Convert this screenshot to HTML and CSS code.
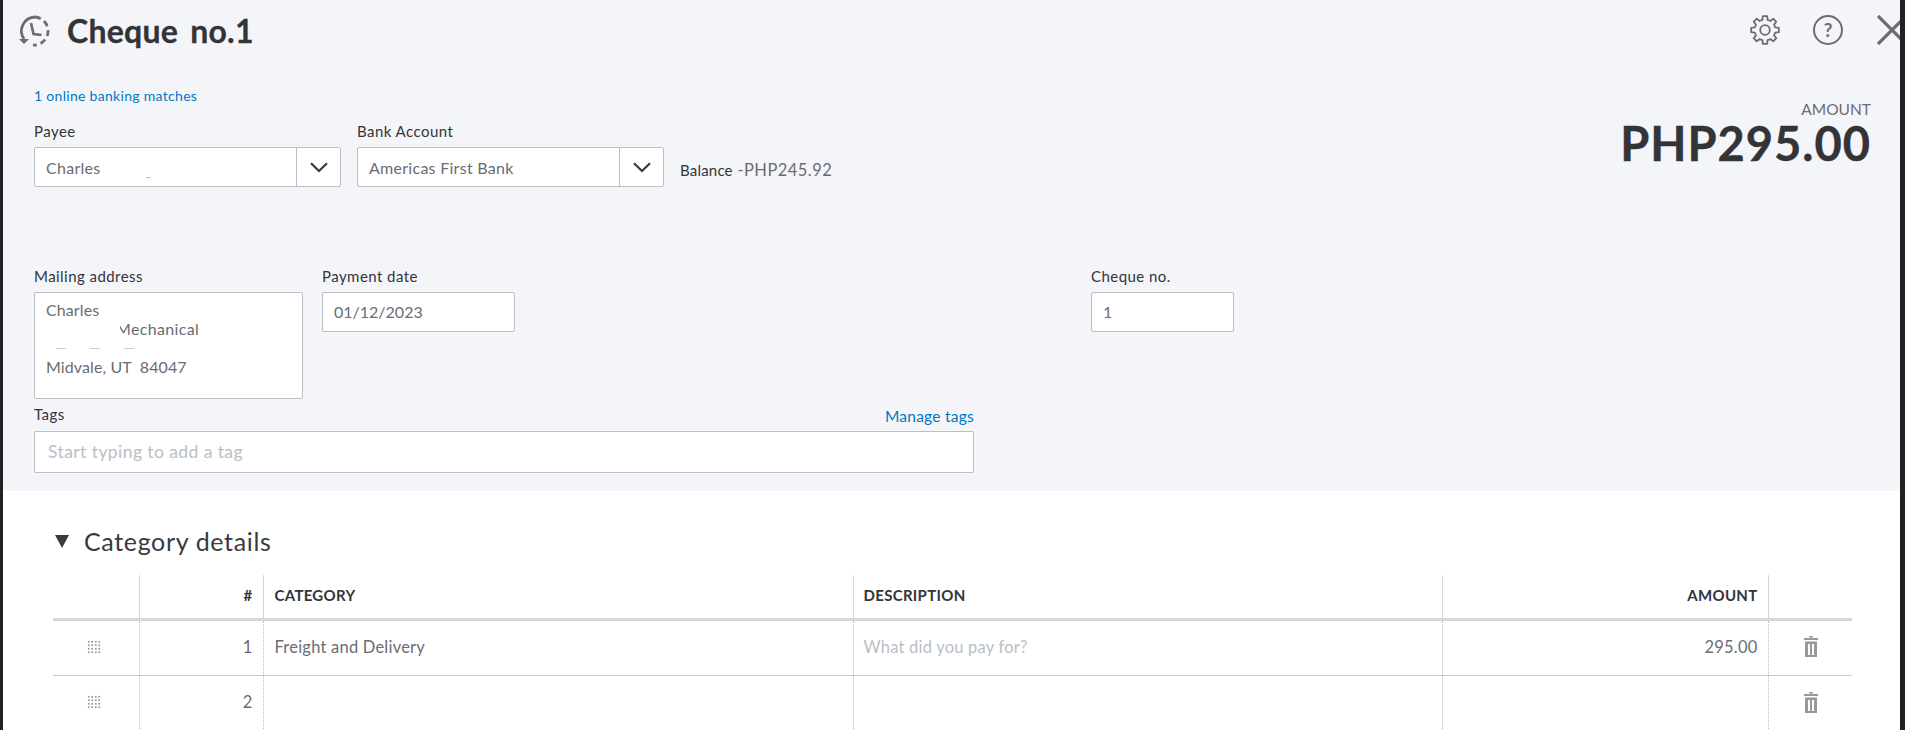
FILE: index.html
```html
<!DOCTYPE html>
<html lang="en">
<head>
<meta charset="utf-8">
<title>Cheque no.1</title>
<link rel="stylesheet" href="styles.css">
</head>
<body>
<div class="page">
  <section class="panel">
    <header class="head">
      <svg class="history" width="36" height="34" viewBox="0 0 36 34" fill="none">
        <path d="M18 3 A14 14 0 0 0 7 25" stroke="#6b6c72" stroke-width="2.8"/>
        <path d="M2 25 H12 L7 30 Z" fill="#6b6c72"/>
        <path d="M18 3 A14 14 0 0 1 16 31" stroke="#6b6c72" stroke-width="2.8" stroke-dasharray="6 4"/>
        <path d="M14 9 L16.5 20 L24.5 21" stroke="#6b6c72" stroke-width="2.6"/>
      </svg>
      <h1 class="title">Cheque no.1</h1>
      <div class="head-icons">
        <svg class="gear" width="30" height="30" viewBox="0 0 30 30" fill="none" stroke="#6b6c72" stroke-width="1.8" stroke-linejoin="round">
          <defs><path id="tooth" d="M10.98 5.3 L12.46 4.81 L12.81 1.17 H17.19 L17.54 4.81 L19.02 5.3"/></defs>
          <use href="#tooth"/>
          <use href="#tooth" transform="rotate(45 15 15)"/>
          <use href="#tooth" transform="rotate(90 15 15)"/>
          <use href="#tooth" transform="rotate(135 15 15)"/>
          <use href="#tooth" transform="rotate(180 15 15)"/>
          <use href="#tooth" transform="rotate(225 15 15)"/>
          <use href="#tooth" transform="rotate(270 15 15)"/>
          <use href="#tooth" transform="rotate(315 15 15)"/>
          <circle cx="15" cy="15" r="4.8"/>
        </svg>
        <span class="help">?</span>
        <div class="close-wrap">
          <svg class="close" width="30" height="30" viewBox="0 0 30 30" fill="none" stroke="#6b6c72" stroke-width="3.2">
            <path d="M1 1 L29 29 M29 1 L1 29"/>
          </svg>
        </div>
      </div>
    </header>

    <div class="top">
      <div>
        <a class="match-link">1 online banking matches</a>
        <div class="row-one">
          <div class="field">
            <label class="label">Payee</label>
            <div class="combo"><span class="combo-value">Charles<i class="speck"></i></span><span class="combo-btn"><svg width="18" height="11" viewBox="0 0 18 11" fill="none" stroke="#393a3d" stroke-width="2.2"><path d="M1 1.2 L9 9 L17 1.2"/></svg></span></div>
          </div>
          <div class="field">
            <label class="label">Bank Account</label>
            <div class="combo"><span class="combo-value">Americas First Bank</span><span class="combo-btn"><svg width="18" height="11" viewBox="0 0 18 11" fill="none" stroke="#393a3d" stroke-width="2.2"><path d="M1 1.2 L9 9 L17 1.2"/></svg></span></div>
          </div>
          <div class="balance"><span class="balance-key">Balance</span> -PHP245.92</div>
        </div>
      </div>
      <div class="amount">
        <div class="amount-label">AMOUNT</div>
        <div class="amount-value">PHP295.00</div>
      </div>
    </div>

    <div class="row-two">
      <div class="field mailing">
        <label class="label">Mailing address</label>
        <div class="address">
          <div>Charles</div>
          <div class="addr-mech">Mechanical<span class="addr-mask"></span></div>
          <div class="addr-blank"><i></i><i></i><i></i></div>
          <div class="addr-city">Midvale, UT&nbsp; 84047</div>
        </div>
      </div>
      <div class="field date">
        <label class="label">Payment date</label>
        <div class="input">01/12/2023</div>
      </div>
      <div class="field cheque">
        <label class="label">Cheque no.</label>
        <div class="input">1</div>
      </div>
    </div>

    <div class="tags">
      <div class="tags-head">
        <label class="label">Tags</label>
        <a class="manage">Manage tags</a>
      </div>
      <div class="tag-input">Start typing to add a tag</div>
    </div>
  </section>

  <section class="details">
    <h2 class="details-title"><span class="tri"></span>Category details</h2>
    <table class="grid">
      <colgroup>
        <col class="c-drag"><col class="c-num"><col class="c-cat"><col class="c-desc"><col class="c-amt"><col class="c-del">
      </colgroup>
      <thead>
        <tr><th></th><th class="right">#</th><th class="cat">CATEGORY</th><th>DESCRIPTION</th><th class="right">AMOUNT</th><th></th></tr>
      </thead>
      <tbody>
        <tr>
          <td><span class="dots"></span></td>
          <td class="right">1</td>
          <td class="cat">Freight and Delivery</td>
          <td class="placeholder">What did you pay for?</td>
          <td class="right">295.00</td>
          <td><svg class="trash" width="14" height="21" viewBox="0 0 14 21" fill="#97989c"><path d="M5 0 H9 V1.5 H5 Z M0 2 H14 V4 H0 Z M1 5.5 H13 V21 H1 Z"/><path d="M4 8 H6 V19 H4 Z M8 8 H10 V19 H8 Z" fill="#fff"/></svg></td>
        </tr>
        <tr>
          <td><span class="dots"></span></td>
          <td class="right">2</td>
          <td></td>
          <td></td>
          <td></td>
          <td><svg class="trash" width="14" height="21" viewBox="0 0 14 21" fill="#97989c"><path d="M5 0 H9 V1.5 H5 Z M0 2 H14 V4 H0 Z M1 5.5 H13 V21 H1 Z"/><path d="M4 8 H6 V19 H4 Z M8 8 H10 V19 H8 Z" fill="#fff"/></svg></td>
        </tr>
      </tbody>
    </table>
  </section>
</div>
</body>
</html>
```
FILE: styles.css
```css
* { box-sizing: border-box; }
html, body { margin: 0; height: 730px; overflow: hidden; background: #222; }
body { font-family: Lato, "Noto Sans", sans-serif; color: #393a3d; }
.page { margin: 0 5px 0 3px; height: 730px; overflow: hidden; background: #fff; }

.panel { background: #f4f5f8; height: 491px; padding: 0 0 0 31px; }

.head { display: flex; align-items: center; height: 60px; margin-left: -17px; }
.history { flex: none; margin-top: 2px; }
.title { margin: 0 0 0 14px; font-size: 32px; font-weight: 700; word-spacing: 4px; letter-spacing: .25px; color: #333437; -webkit-text-stroke: .3px #333437; }
.head-icons { margin-left: auto; display: flex; align-items: center; height: 30px; margin-top: -1px; }
.gear { flex: none; }
.help { flex: none; width: 30px; height: 30px; margin-left: 33px; border: 2px solid #6b6c72; border-radius: 50%; display: flex; align-items: center; justify-content: center; font-size: 19px; font-weight: 700; color: #6b6c72; }
.close-wrap { flex: none; width: 23px; height: 30px; margin-left: 34px; overflow: hidden; }
.close { display: block; }

.top { display: flex; justify-content: space-between; padding-right: 29px; padding-top: 28px; }
.match-link { display: block; height: 16px; line-height: 16px; margin-bottom: 19px; font-size: 14px; color: #0077c5; letter-spacing: .3px; }
.row-one { display: flex; gap: 16px; }
.field { display: flex; flex-direction: column; }
.label { height: 16px; line-height: 16px; margin-bottom: 8px; font-size: 15px; color: #333437; letter-spacing: .45px; }
.combo { display: flex; width: 307px; height: 40px; background: #fff; border: 1px solid #babec5; border-radius: 2px; }
.combo-value { position: relative; flex: 1; padding-left: 11px; line-height: 39px; font-size: 16px; letter-spacing: .28px; color: #6b6c72; }
.speck { position: absolute; left: 111px; top: 29px; width: 5px; height: 1px; background: #babec5; }
.combo-btn { flex: none; width: 44px; border-left: 1px solid #babec5; display: flex; align-items: center; justify-content: center; }
.balance { align-self: flex-end; height: 24px; line-height: 24px; margin-bottom: 5px; font-size: 16.5px; color: #6b6c72; letter-spacing: .45px; }
.balance-key { font-size: 15px; color: #333437; letter-spacing: .2px; }

.amount { text-align: right; padding-top: 11px; }
.amount-label { font-size: 15.5px; line-height: 20px; color: #6b6c72; }
.amount-value { margin-top: -1px; font-size: 47px; line-height: 50px; font-weight: 700; color: #333437; letter-spacing: 1px; -webkit-text-stroke: .4px #333437; }

.row-two { display: flex; margin-top: 81px; }
.mailing { width: 269px; }
.date { width: 193px; margin-left: 19px; }
.cheque { width: 143px; margin-left: 576px; }
.input { height: 40px; background: #fff; border: 1px solid #babec5; border-radius: 2px; padding-left: 11px; line-height: 38px; font-size: 16px; color: #6b6c72; }
.address { height: 107px; background: #fff; border: 1px solid #babec5; border-radius: 2px; padding: 8px 11px; line-height: 18.6px; font-size: 16px; letter-spacing: .1px; color: #6b6c72; }
.addr-mech { position: relative; padding-left: 70px; letter-spacing: .35px; }
.addr-mask { position: absolute; left: 67px; top: 0; width: 7px; height: 19px; background: #fff; }
.addr-blank { height: 18.6px; display: flex; gap: 24px; padding: 10px 0 0 10px; }
.addr-blank i { display: block; width: 10px; height: 1px; background: #c9cbd0; }
.addr-city { padding-top: 1px; }

.tags { width: 940px; margin-top: 7px; }
.tags-head { display: flex; justify-content: space-between; height: 25px; }
.manage { font-size: 15.5px; line-height: 20px; color: #0077c5; letter-spacing: .25px; }
.tag-input { height: 42px; background: #fff; border: 1px solid #babec5; border-radius: 2px; padding-left: 13px; line-height: 40px; font-size: 17.5px; color: #babec5; letter-spacing: .42px; }

.details { padding: 0 0 0 50px; }
.details-title { margin: 8px 0 -8px; height: 84px; display: flex; align-items: center; font-size: 25px; font-weight: 400; line-height: 28px; color: #393a3d; letter-spacing: .65px; }
.tri { width: 0; height: 0; margin: 0 15px 0 2px; border-left: 7px solid transparent; border-right: 7px solid transparent; border-top: 13px solid #393a3d; }

.grid { border-collapse: collapse; table-layout: fixed; width: 1799px; }
.c-drag { width: 86px; }
.c-num { width: 124px; }
.c-cat { width: 590px; }
.c-desc { width: 589px; }
.c-amt { width: 326px; }
.c-del { width: 84px; }
.grid th { height: 44px; padding: 0 11px 2px 10px; font-size: 15px; font-weight: 700; text-align: left; color: #333437; border-bottom: 3px solid #d4d7dc; border-left: 1px solid #d4d7dc; letter-spacing: .3px; }
.grid th:first-child, .grid td:first-child { border-left: 0; }
.grid td { height: 56px; padding: 0 10px 2px 10px; font-size: 16.5px; color: #6b6c72; border-bottom: 1px solid #c9cbd0; border-left: 1px dotted #babec5; letter-spacing: .22px; }
.grid th.right, .grid td.right { text-align: right; padding-right: 10px; }
.grid th.cat, .grid td.cat { padding-left: 11px; }
.grid td.placeholder { color: #babec5; }
.grid td:first-child, .grid td:last-child { text-align: center; }
.dots { display: block; width: 14px; height: 14px; margin: 0 auto; position: relative; left: -2px; background-image: radial-gradient(circle, #97989c 1px, transparent 1.3px); background-size: 3.5px 3.5px; }
.trash { display: block; margin: 0 auto; position: relative; left: 1px; }
```
